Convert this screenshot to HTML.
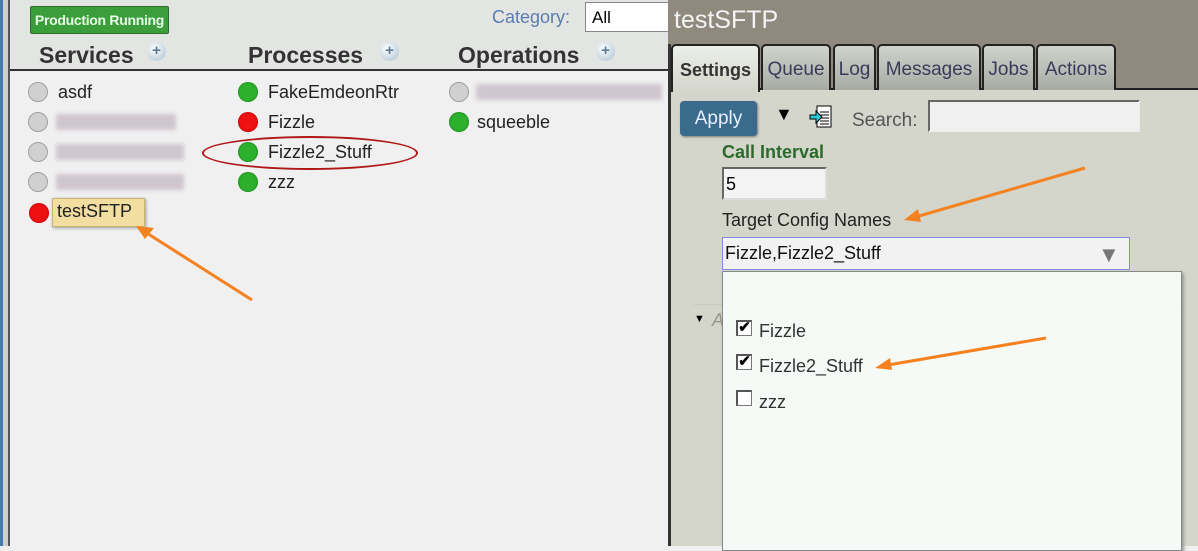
<!DOCTYPE html>
<html><head><meta charset="utf-8"><style>
*{margin:0;padding:0;box-sizing:border-box}
body{width:1198px;height:546px;overflow:hidden;position:relative;font-family:"Liberation Sans",sans-serif;background:#f0f0f0}
.a{position:absolute}
.dot{position:absolute;width:20px;height:20px;border-radius:50%}
.g{background:#2db12d;box-shadow:inset 0 0 2px #1a6a1a}
.r{background:#ee1111;box-shadow:inset 0 0 2px #900}
.gr{background:#d0d0d0;border:1px solid #a0a0a0}
.t{position:absolute;font-size:18px;color:#222}
.blur{position:absolute;height:16px;background:#c8bcc8;filter:blur(2px);opacity:.8}
.h{position:absolute;font-size:23px;font-weight:bold;color:#333}
.plus{position:absolute;width:19px;height:19px;border-radius:50%;background:radial-gradient(circle at 40% 35%,#fff,#a9bfd0);color:#5b7c96;font-size:15px;font-weight:bold;line-height:17px;text-align:center}
.tab{position:absolute;top:44px;height:46px;border:2px solid #222;border-bottom:none;border-radius:5px 5px 0 0;background:linear-gradient(#d0d2cc,#a8aaa4);font-size:19px;color:#3a3a5a;text-align:center;padding-top:13px;white-space:nowrap}
.cb{position:absolute;width:16px;height:16px;border:1px solid #777;border-top:2px solid #555;border-left:2px solid #555;background:#fff;font-size:15px;line-height:12px;font-weight:bold;text-align:center}
</style></head><body>
<div class="a" style="left:0;top:0;width:3px;height:546px;background:#4a78b0"></div>
<div class="a" style="left:3px;top:0;width:5px;height:546px;background:#cfcfcf"></div>
<div class="a" style="left:8px;top:0;width:2px;height:546px;background:#555"></div>
<div class="a" style="left:10px;top:0;width:660px;height:69px;background:#e3e5e3"></div>
<div class="a" style="left:30px;top:6px;width:139px;height:28px;background:#3b9e3b;border:1px solid #2a6e2a;border-radius:2px;color:#e8ffe8;font-size:14px;font-weight:bold;text-align:center;line-height:26px;white-space:nowrap;letter-spacing:-0.3px">Production Running</div>
<div class="a" style="left:492px;top:7px;font-size:18px;color:#5a7db0">Category:</div>
<div class="a" style="left:585px;top:2px;width:90px;height:30px;background:#fff;border:1px solid #888;font-size:17px;padding:5px 6px">All</div>
<div class="h" style="left:39px;top:42px">Services</div><div class="plus" style="left:147px;top:42px">+</div>
<div class="h" style="left:248px;top:42px">Processes</div><div class="plus" style="left:380px;top:42px">+</div>
<div class="h" style="left:458px;top:42px">Operations</div><div class="plus" style="left:596px;top:42px">+</div>
<div class="a" style="left:10px;top:69px;width:660px;height:2px;background:#333"></div>
<div class="dot gr" style="left:28px;top:82px"></div><div class="t" style="left:58px;top:82px">asdf</div>
<div class="dot gr" style="left:28px;top:112px"></div><div class="blur" style="left:56px;top:114px;width:120px"></div>
<div class="dot gr" style="left:28px;top:142px"></div><div class="blur" style="left:56px;top:144px;width:128px"></div>
<div class="dot gr" style="left:28px;top:172px"></div><div class="blur" style="left:56px;top:174px;width:128px"></div>
<div class="dot r" style="left:29px;top:203px"></div>
<div class="a" style="left:52px;top:198px;width:93px;height:29px;background:#f2dea0;border:1px solid #c8b470;box-shadow:1px 1px 3px #999"></div>
<div class="t" style="left:57px;top:201px">testSFTP</div>
<div class="dot g" style="left:238px;top:82px"></div><div class="t" style="left:268px;top:82px">FakeEmdeonRtr</div>
<div class="dot r" style="left:238px;top:112px"></div><div class="t" style="left:268px;top:112px">Fizzle</div>
<div class="dot g" style="left:238px;top:142px"></div><div class="t" style="left:268px;top:142px">Fizzle2_Stuff</div>
<div class="dot g" style="left:238px;top:172px"></div><div class="t" style="left:268px;top:172px">zzz</div>
<div class="a" style="left:202px;top:136px;width:216px;height:34px;border:2px solid #b01818;border-radius:50%"></div>
<div class="dot gr" style="left:449px;top:82px"></div><div class="blur" style="left:476px;top:84px;width:186px"></div>
<div class="dot g" style="left:449px;top:112px"></div><div class="t" style="left:477px;top:112px">squeeble</div>
<div class="a" style="left:668px;top:0;width:530px;height:90px;background:#908a7e"></div>
<div class="a" style="left:674px;top:6px;font-size:25px;color:#f4f4f4">testSFTP</div>
<div class="a" style="left:668px;top:90px;width:530px;height:456px;background:#d4d6cc"></div>
<div class="a" style="left:668px;top:88px;width:530px;height:2px;background:#222"></div>
<div class="a" style="left:668px;top:44px;width:3px;height:502px;background:#333"></div>
<div class="tab" style="left:671px;width:89px;background:linear-gradient(#eceeea,#d4d6cc);height:48px;color:#333;font-weight:bold;font-size:18px;padding-top:14px">Settings</div>
<div class="tab" style="left:761px;width:70px">Queue</div>
<div class="tab" style="left:833px;width:43px">Log</div>
<div class="tab" style="left:877px;width:104px">Messages</div>
<div class="tab" style="left:982px;width:53px">Jobs</div>
<div class="tab" style="left:1036px;width:80px">Actions</div>
<div class="a" style="left:680px;top:101px;width:77px;height:35px;background:#3a6a8c;border-radius:4px;color:#e8f0ff;font-size:19px;text-align:center;line-height:35px;box-shadow:1px 1px 2px #777">Apply</div>
<div class="a" style="left:775px;top:104px;font-size:18px;color:#000">▼</div>
<div class="a" style="left:808px;top:104px;width:26px;height:26px"><svg width="26" height="26"><rect x="9" y="2" width="14" height="21" fill="#fff" stroke="#000"/><path d="M12 8h9M12 11h9M12 14h9M12 17h9M12 20h9" stroke="#000"/><path d="M2 11h6v-4l6 6-6 6v-4H2z" fill="#2cc8d8" stroke="#000"/></svg></div>
<div class="a" style="left:852px;top:110px;font-size:19px;color:#555">Search:</div>
<div class="a" style="left:928px;top:100px;width:212px;height:32px;background:#f0f0f0;border:2px solid #666;border-right-color:#eee;border-bottom-color:#eee"></div>
<div class="a" style="left:722px;top:142px;font-size:18px;font-weight:bold;color:#2a6a2a">Call Interval</div>
<div class="a" style="left:722px;top:167px;width:105px;height:33px;background:#f4f4f4;border:2px solid #666;border-right-color:#ddd;border-bottom-color:#ddd;font-size:18px;padding:5px 2px">5</div>
<div class="a" style="left:722px;top:210px;font-size:18px;color:#222">Target Config Names</div>
<div class="a" style="left:722px;top:237px;width:408px;height:33px;background:#f2f2f2;border:1px solid #8888dd;font-size:18px;padding:5px 2px;color:#111">Fizzle,Fizzle2_Stuff</div>
<div class="a" style="left:1098px;top:242px;font-size:22px;color:#777">▼</div>
<div class="a" style="left:694px;top:313px;font-size:11px;color:#000">▼</div>
<div class="a" style="left:712px;top:310px;font-size:18px;color:#998;font-style:italic">A</div>
<div class="a" style="left:694px;top:304px;width:490px;height:1px;background:#c8c8c0"></div>
<div class="a" style="left:722px;top:271px;width:460px;height:280px;background:#f6faf7;border:1px solid #888;box-shadow:2px 2px 3px #999"></div>
<div class="cb" style="left:736px;top:320px">✔</div><div class="t" style="left:759px;top:321px;color:#333">Fizzle</div>
<div class="cb" style="left:736px;top:354px">✔</div><div class="t" style="left:759px;top:356px;color:#333">Fizzle2_Stuff</div>
<div class="cb" style="left:736px;top:390px"></div><div class="t" style="left:759px;top:392px;color:#333">zzz</div>
<svg class="a" style="left:0;top:0" width="1198" height="546">
<g stroke="#f58220" stroke-width="3" fill="none">
<line x1="252" y1="300" x2="142" y2="230"/>
<line x1="1085" y1="168" x2="912" y2="218"/>
<line x1="1046" y1="338" x2="882" y2="366"/>
</g>
<g fill="#f58220">
<path d="M136 226l18 2-9 11z"/>
<path d="M904 220l14-11 3 13z"/>
<path d="M875 368l15-10 2 12z"/>
</g>
</svg>
</body></html>
